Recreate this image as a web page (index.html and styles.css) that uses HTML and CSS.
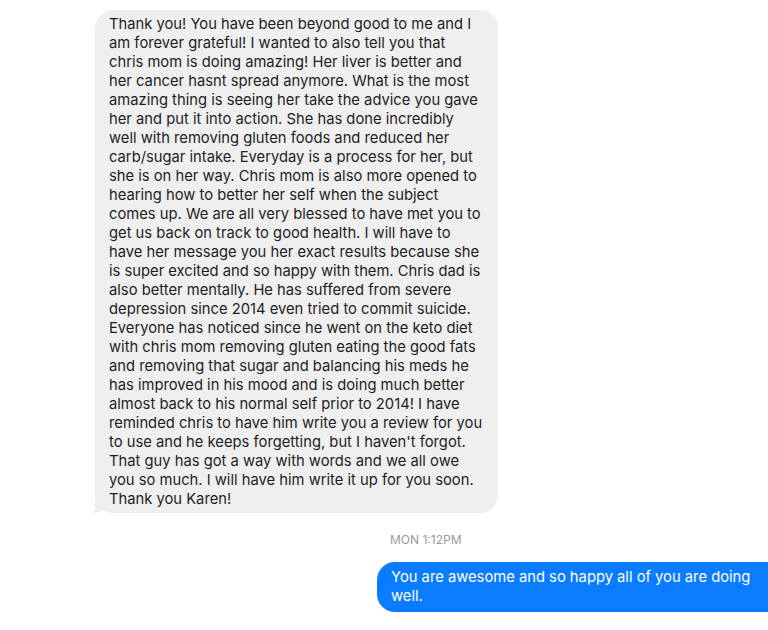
FILE: index.html
```html
<!DOCTYPE html>
<html lang="en">
<head>
    <meta charset="UTF-8">
    <title>Messages</title>
    <link rel="stylesheet" href="styles.css">
</head>
<body>
    <div class="thread">
        <div class="bubble incoming">
            <p>Thank you! You have been beyond good to me and I<br>
            am forever grateful! I wanted to also tell you that<br>
            chris mom is doing amazing! Her liver is better and<br>
            her cancer hasnt spread anymore. What is the most<br>
            amazing thing is seeing her take the advice you gave<br>
            her and put it into action. She has done incredibly<br>
            well with removing gluten foods and reduced her<br>
            carb/sugar intake. Everyday is a process for her, but<br>
            she is on her way. Chris mom is also more opened to<br>
            hearing how to better her self when the subject<br>
            comes up. We are all very blessed to have met you to<br>
            get us back on track to good health. I will have to<br>
            have her message you her exact results because she<br>
            is super excited and so happy with them. Chris dad is<br>
            also better mentally. He has suffered from severe<br>
            depression since 2014 even tried to commit suicide.<br>
            Everyone has noticed since he went on the keto diet<br>
            with chris mom removing gluten eating the good fats<br>
            and removing that sugar and balancing his meds he<br>
            has improved in his mood and is doing much better<br>
            almost back to his normal self prior to 2014! I have<br>
            reminded chris to have him write you a review for you<br>
            to use and he keeps forgetting, but I haven't forgot.<br>
            That guy has got a way with words and we all owe<br>
            you so much. I will have him write it up for you soon.<br>
            Thank you Karen!</p>
        </div>
        <div class="stamp">MON 1:12PM</div>
        <div class="bubble outgoing">
            <p>You are awesome and so happy all of you are doing<br>
            well.</p>
        </div>
    </div>
</body>
</html>
```

FILE: styles.css
```css
body {
    margin: 0;
    background: #fff;
    font-family: Inter, "Noto Sans", sans-serif;
    overflow: hidden;
}
.thread {
    display: flex;
    flex-direction: column;
    align-items: flex-start;
    padding-top: 10px;
    width: 900px;
}
.bubble {
    position: relative;
    box-sizing: border-box;
    border-radius: 18px;
    font-size: 14.75px;
    line-height: 19px;
}
.bubble p {
    margin: 0;
    white-space: nowrap;
}
.incoming {
    margin-left: 95px;
    width: 403px;
    padding: 5px 14px 4px 14px;
    background: #efefef;
    color: #1d1d1f;
}
.incoming::before {
    content: "";
    position: absolute;
    left: -3px;
    bottom: 0;
    width: 14px;
    height: 14px;
    background: #efefef;
    border-bottom-right-radius: 12px 10px;
}
.incoming::after {
    content: "";
    position: absolute;
    left: -8px;
    bottom: 0;
    width: 8px;
    height: 14px;
    background: #fff;
    border-bottom-right-radius: 6px;
}
.stamp {
    margin: 19px 0 0 390px;
    font-size: 12px;
    line-height: 16px;
    color: #9a9a9e;
}
.outgoing {
    margin: 14px 0 0 377px;
    width: 420px;
    padding: 6px 14px 6px 14px;
    background: #0a7cff;
    color: #fff;
}
```
